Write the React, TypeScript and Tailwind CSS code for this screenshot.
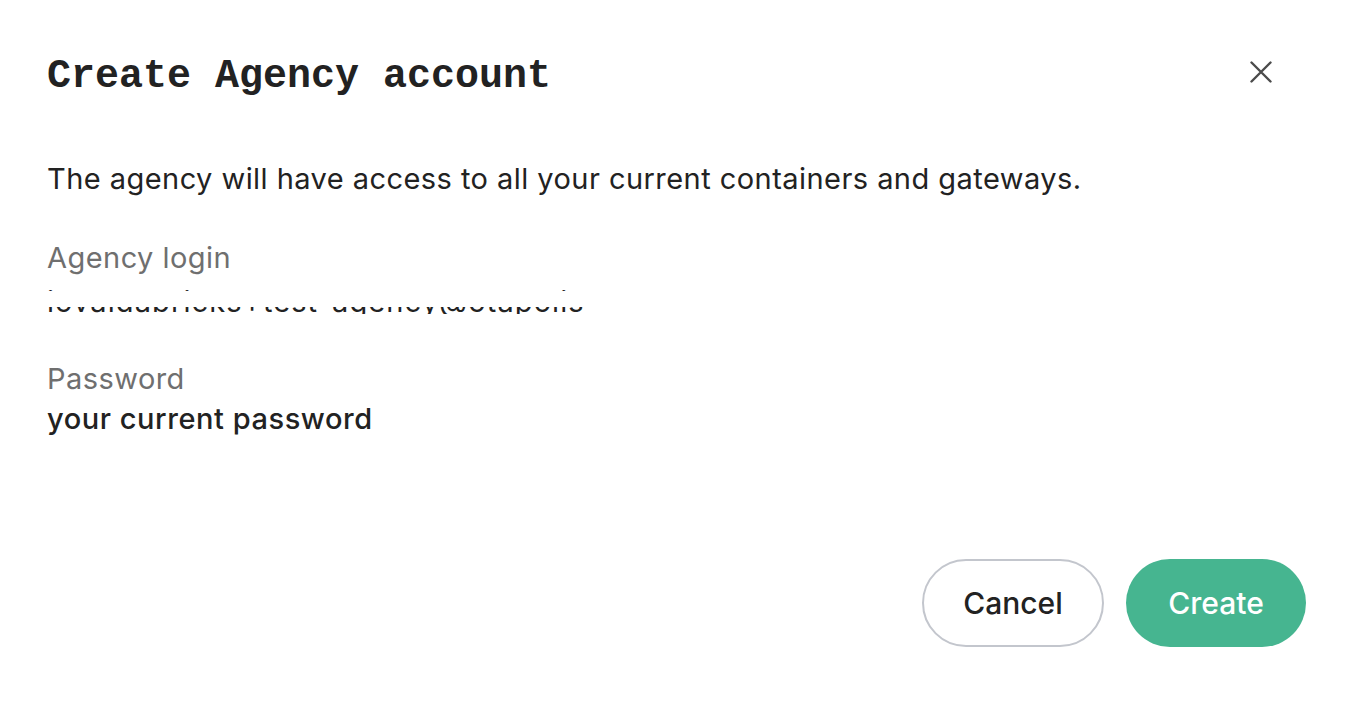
import React from 'react';

const sans = { fontFamily: 'Inter, "Noto Sans", sans-serif' };

const CloseIcon = () => (
  <svg width="24" height="24" viewBox="0 0 24 24" fill="none" stroke="#4b4b4b" strokeWidth="2.4" strokeLinecap="round">
    <path d="M2.5 2.5 L21.5 21.5 M21.5 2.5 L2.5 21.5" />
  </svg>
);

export default function App() {
  return (
    <div className="w-[1358px] h-[702px] bg-white text-[#222222] overflow-hidden" style={sans}>
      <div className="flex items-start justify-between pl-[47px] pr-[81px] pt-[53px]">
        <h1 className="font-['Liberation_Mono',monospace] font-bold text-[40px] leading-[48px] text-[#222222]">
          Create Agency account
        </h1>
        <button className="mt-[3px] p-1">
          <CloseIcon />
        </button>
      </div>

      <div className="pl-[47px] pt-[58px] flex flex-col">
        <p className="text-[29px] leading-[40px] tracking-[0.45px]">
          The agency will have access to all your current containers and gateways.
        </p>

        <div className="mt-[39px] flex flex-col">
          <span className="text-[29px] leading-[40px] tracking-[0.45px] text-[#6f6f6f]">Agency login</span>
          <div className="relative h-[40px] mt-[4px] overflow-hidden">
            <span className="text-[29px] leading-[40px] tracking-[1.1px] text-[#222222]">
              iovaldabricks+test-agency@otapolis
            </span>
            <div className="absolute left-0 right-0 top-[9px] h-[16px] bg-white" />
            <div className="absolute left-0 right-0 top-[32px] h-[8px] bg-white" />
          </div>
        </div>

        <div className="mt-[37px] flex flex-col">
          <span className="text-[29px] leading-[40px] tracking-[0.45px] text-[#6f6f6f]">Password</span>
          <span className="text-[29px] leading-[40px] tracking-[0.55px] font-medium">your current password</span>
        </div>
      </div>

      <div className="flex justify-end gap-[22px] pr-[52px] mt-[120px]">
        <button className="w-[182px] h-[88px] rounded-full border-2 border-[#c3c6cd] bg-white text-[30px] font-medium text-[#222222]">
          Cancel
        </button>
        <button className="w-[180px] h-[88px] rounded-full bg-[#46b590] text-[30px] font-medium text-white">
          Create
        </button>
      </div>
    </div>
  );
}
